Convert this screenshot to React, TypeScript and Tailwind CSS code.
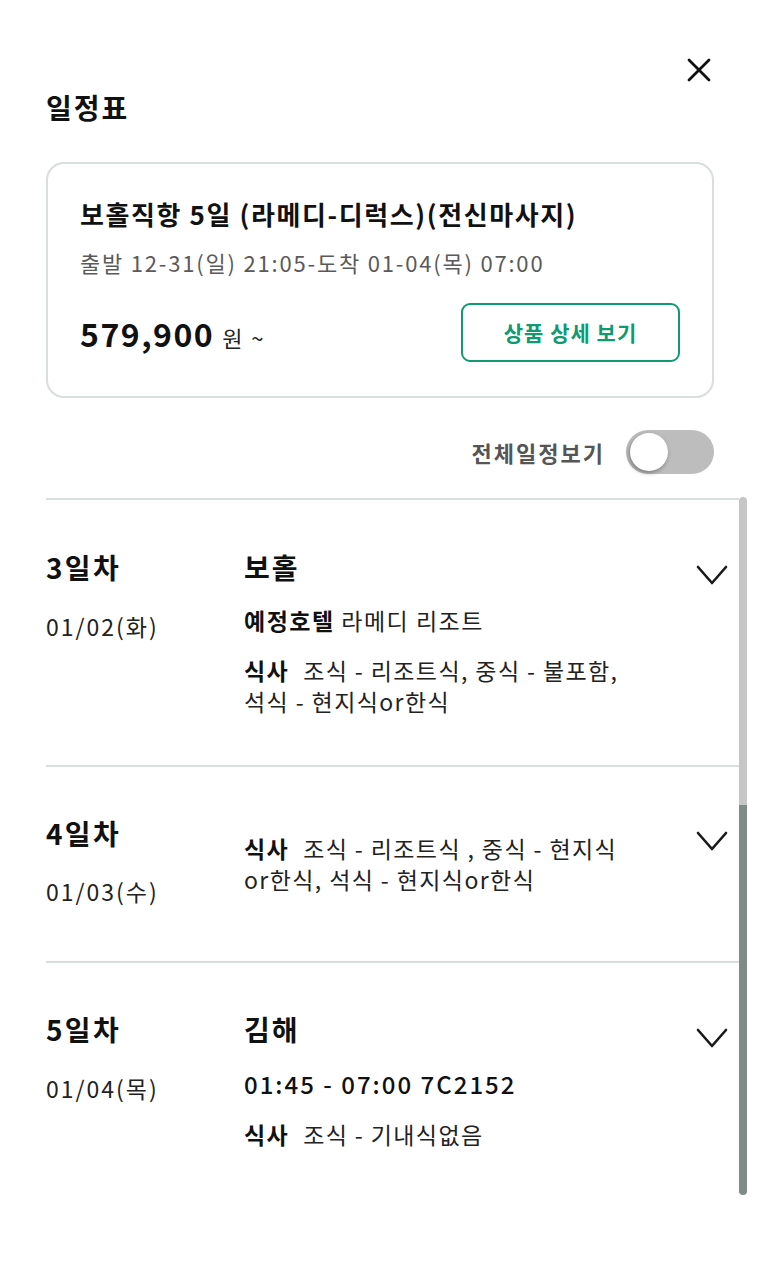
import React from "react";

const font = { fontFamily: '"Noto Sans CJK KR", "Noto Sans", sans-serif' };

function Chevron() {
  return (
    <svg width="32" height="22" viewBox="0 0 32 22" fill="none" className="shrink-0">
      <polyline points="2,3 16,19 30,3" stroke="#1a1a1a" strokeWidth="2.6" strokeLinecap="round" strokeLinejoin="round" />
    </svg>
  );
}

function Meal({ lines }: { lines: string[] }) {
  return (
    <div className="text-[23px] leading-[31px] tracking-[1.4px] text-[#222]">
      {lines.map((l, i) => (
        <div key={i} className="whitespace-nowrap">
          {i === 0 ? <><span className="font-bold text-[#111]">식사</span><span className="inline-block w-[14px]" /></> : null}
          {l}
        </div>
      ))}
    </div>
  );
}

export default function App() {
  return (
    <div style={font} className="w-[764px] h-[1276px] bg-white text-[#111] pl-[46px] pr-[50px] overflow-hidden">
      <div className="flex justify-end pt-[58px] pr-[3px]">
        <svg width="24" height="24" viewBox="0 0 24 24" fill="none">
          <line x1="2" y1="2" x2="22" y2="22" stroke="#111" strokeWidth="2.8" strokeLinecap="round" />
          <line x1="22" y1="2" x2="2" y2="22" stroke="#111" strokeWidth="2.8" strokeLinecap="round" />
        </svg>
      </div>
      <h1 className="mt-[5px] text-[28px] leading-[40px] tracking-[2px] font-bold">일정표</h1>

      <div className="mt-[35px] rounded-[18px] border-2 border-[#d8dedc] pl-[32px] pr-[32px] pt-[32px] pb-[34px]">
        <div className="text-[26px] leading-[36px] tracking-[1.6px] font-bold whitespace-nowrap">보홀직항 5일 (라메디-디럭스)(전신마사지)</div>
        <div className="mt-[16px] text-[22px] leading-[28px] tracking-[1.8px] text-[#5a5a5a] whitespace-nowrap">출발 12-31(일) 21:05-도착 01-04(목) 07:00</div>
        <div className="mt-[27px] flex items-center justify-between">
          <div className="flex items-baseline whitespace-nowrap">
            <span className="text-[32px] tracking-[1.5px] font-bold">579,900</span>
            <span className="ml-[8px] text-[22px] tracking-[2px] text-[#222]">원 ~</span>
          </div>
          <button className="w-[219px] h-[59px] shrink-0 rounded-[9px] border-2 border-[#0f9a72] text-[#0f9a72] text-[21px] tracking-[1px] font-bold">
            상품 상세 보기
          </button>
        </div>
      </div>

      <div className="mt-[32px] flex items-center justify-end gap-[21px]">
        <span className="text-[22px] tracking-[2px] font-bold text-[#555]">전체일정보기</span>
        <div className="w-[88px] h-[44px] rounded-full bg-[#bdbdbd] flex items-center pl-[4px]">
          <div className="w-[38px] h-[38px] rounded-full bg-white shadow-[-1px_2px_4px_rgba(0,0,0,0.35)]" />
        </div>
      </div>

      <div className="mt-[24px] mr-[-33px] flex h-[697px]">
        <div className="flex-1 overflow-hidden">
          {/* Day 3 */}
          <div className="border-t-2 border-b-2 border-[#d8dedc] flex pt-[47px] pb-[48px] pr-[11px]">
            <div className="w-[198px] shrink-0">
              <div className="text-[28px] leading-[40px] tracking-[2.3px] font-bold">3일차</div>
              <div className="mt-[23px] text-[23px] leading-[32px] tracking-[2px] text-[#222]">01/02(화)</div>
            </div>
            <div className="flex-1">
              <div className="text-[28px] leading-[40px] tracking-[2px] font-bold">보홀</div>
              <div className="mt-[18px] text-[23px] leading-[30px] tracking-[1.5px] text-[#222] whitespace-nowrap">
                <span className="font-bold text-[#111]">예정호텔</span> 라메디 리조트
              </div>
              <div className="mt-[20px]">
                <Meal lines={["조식 - 리조트식, 중식 - 불포함,", "석식 - 현지식or한식"]} />
              </div>
            </div>
            <div className="mt-[17px]"><Chevron /></div>
          </div>

          {/* Day 4 */}
          <div className="border-b-2 border-[#d8dedc] flex pt-[46px] pb-[54px] pr-[11px]">
            <div className="w-[198px] shrink-0">
              <div className="text-[28px] leading-[40px] tracking-[2.3px] font-bold">4일차</div>
              <div className="mt-[22px] text-[23px] leading-[32px] tracking-[2px] text-[#222]">01/03(수)</div>
            </div>
            <div className="flex-1 mt-[20px]">
              <Meal lines={["조식 - 리조트식 , 중식 - 현지식", "or한식, 석식 - 현지식or한식"]} />
            </div>
            <div className="mt-[17px]"><Chevron /></div>
          </div>

          {/* Day 5 */}
          <div className="flex pt-[46px] pr-[11px]">
            <div className="w-[198px] shrink-0">
              <div className="text-[28px] leading-[40px] tracking-[2.3px] font-bold">5일차</div>
              <div className="mt-[23px] text-[23px] leading-[32px] tracking-[2px] text-[#222]">01/04(목)</div>
            </div>
            <div className="flex-1">
              <div className="text-[28px] leading-[40px] tracking-[2px] font-bold">김해</div>
              <div className="mt-[20px] text-[24px] leading-[30px] tracking-[2px] font-medium text-[#111] whitespace-nowrap">01:45 - 07:00 7C2152</div>
              <div className="mt-[20px]">
                <Meal lines={["조식 - 기내식없음"]} />
              </div>
            </div>
            <div className="mt-[18px]"><Chevron /></div>
          </div>
        </div>
        <div className="w-[8px] shrink-0 flex flex-col -mt-[1px]">
          <div className="h-[308px] rounded-t-full bg-[#c6c6c6]" />
          <div className="flex-1 rounded-b-full bg-[#7e8b87]" />
        </div>
      </div>
    </div>
  );
}
